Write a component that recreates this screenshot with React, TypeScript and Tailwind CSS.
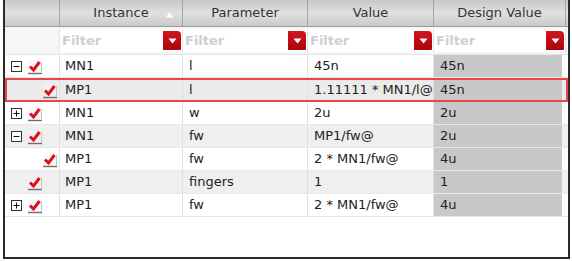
import React from "react";

type Row = {
  tree: "minus" | "plus" | null;
  level: 0 | 1;
  inst: string;
  param: string;
  value: string;
  design: string;
};

const rows: Row[] = [
  { tree: "minus", level: 0, inst: "MN1", param: "l", value: "45n", design: "45n" },
  { tree: null, level: 1, inst: "MP1", param: "l", value: "1.11111 * MN1/l@", design: "45n" },
  { tree: "plus", level: 0, inst: "MN1", param: "w", value: "2u", design: "2u" },
  { tree: "minus", level: 0, inst: "MN1", param: "fw", value: "MP1/fw@", design: "2u" },
  { tree: null, level: 1, inst: "MP1", param: "fw", value: "2 * MN1/fw@", design: "4u" },
  { tree: null, level: 0, inst: "MP1", param: "fingers", value: "1", design: "1" },
  { tree: "plus", level: 0, inst: "MP1", param: "fw", value: "2 * MN1/fw@", design: "4u" },
];

const SELECTED = 1;

function CheckBox() {
  return (
    <svg width="16" height="17" viewBox="0 0 16 17" className="shrink-0">
      <rect x="1" y="2" width="14" height="13" fill="#f4f4f4" opacity="0.5" />
      <line x1="1" y1="15.5" x2="15" y2="15.5" stroke="#6e6e6e" strokeWidth="1.4" />
      <line x1="14.5" y1="4" x2="14.5" y2="15" stroke="#c4c4c4" strokeWidth="1" />
      <path d="M3 8.5 L6.5 12 L12.5 4" fill="none" stroke="#e0101a" strokeWidth="3" strokeLinejoin="miter" strokeLinecap="butt" />
    </svg>
  );
}

function TreeBox({ kind }: { kind: "minus" | "plus" }) {
  return (
    <svg width="11" height="11" viewBox="0 0 11 11" className="shrink-0">
      <rect x="0.5" y="0.5" width="10" height="10" fill="white" stroke="#333" />
      <line x1="2.5" y1="5.5" x2="8.5" y2="5.5" stroke="#111" />
      {kind === "plus" && <line x1="5.5" y1="2.5" x2="5.5" y2="8.5" stroke="#111" />}
    </svg>
  );
}

function FilterButton() {
  return (
    <div className="flex h-[19px] w-[18px] shrink-0 items-center justify-center rounded-tr-[4px] rounded-br-[1px] bg-gradient-to-b from-[#d4141c] to-[#a8060c]">
      <svg width="9" height="6" viewBox="0 0 9 6">
        <path d="M0.5 0.5 L8.5 0.5 L4.5 5.5 Z" fill="white" />
      </svg>
    </div>
  );
}

function FilterCell({ w }: { w: string }) {
  return (
    <div className={`${w} flex items-center justify-between border-r border-[#e4e4e4] bg-white pl-[2px] pr-[1px]`}>
      <span className="font-bold text-[#cfcfcf]">Filter</span>
      <FilterButton />
    </div>
  );
}

function Header({ w, label, sort }: { w: string; label: string; sort?: boolean }) {
  return (
    <div className={`${w} relative flex items-center justify-center border-r border-[#a4a4a4] text-[#333]`}>
      <span>{label}</span>
      {sort && (
        <svg width="9" height="6" viewBox="0 0 9 6" className="absolute right-[8px] top-[12px]">
          <path d="M0.5 5.5 L8.5 5.5 L4.5 0.5 Z" fill="white" />
        </svg>
      )}
    </div>
  );
}

export default function App() {
  return (
    <div
      className="h-[261px] w-[572px] bg-white pb-[2px] pl-[3px] pr-[2px] text-[13px] text-[#222]"
      style={{ fontFamily: '"DejaVu Sans", sans-serif' }}
    >
      <div className="flex h-full flex-col border-b-2 border-l-2 border-r-2 border-[#2a2a2a] bg-white">
        {/* header */}
        <div className="flex h-[27px] border-b border-[#9c9c9c] bg-gradient-to-b from-[#c8c8c8] via-[#e0e0e0] to-[#cacaca]">
          <Header w="w-[55px]" label="" />
          <Header w="w-[123px]" label="Instance" sort />
          <Header w="w-[125px]" label="Parameter" />
          <Header w="w-[126px]" label="Value" />
          <Header w="w-[132px]" label="Design Value" />
        </div>
        {/* filter row */}
        <div className="flex h-[28px] items-center border-b border-[#e4e4e4] bg-[#f6f6f6] py-[2px]">
          <div className="h-full w-[55px] border-r border-[#e4e4e4]" />
          <FilterCell w="h-full w-[123px]" />
          <FilterCell w="h-full w-[125px]" />
          <FilterCell w="h-full w-[126px]" />
          <FilterCell w="h-full w-[132px]" />
        </div>
        {/* data rows */}
        {rows.map((r, i) => {
          const sel = i === SELECTED;
          const bg = sel ? "bg-[#ebebeb]" : i % 2 === 1 ? "bg-[#efefef]" : "bg-white";
          return (
            <div
              key={i}
              className={`flex ${sel ? "h-[24px] border-2 border-[#e8474a]" : "h-[23px] border-b border-[#e8e8e8]"} ${bg}`}
            >
              <div className={`flex ${sel ? "w-[53px]" : "w-[55px]"} items-center border-r border-[#e0e0e0]`}>
                <div className={`${sel ? "w-[0px]" : "w-[2px]"}`} />
                <div className="flex w-[18px] justify-center">{r.tree && <TreeBox kind={r.tree} />}</div>
                <div className={r.level === 1 ? "w-[17px]" : "w-[2px]"} />
                <CheckBox />
              </div>
              <div className="flex w-[123px] items-center border-r border-[#e0e0e0] pl-[5px]">{r.inst}</div>
              <div className="flex w-[125px] items-center border-r border-[#e0e0e0] pl-[6px]">{r.param}</div>
              <div className="flex w-[126px] items-center border-r border-[#e0e0e0] pl-[6px]">{r.value}</div>
              <div className="flex w-[128px] items-center bg-[#c8c8c8] pl-[6px]">{r.design}</div>
            </div>
          );
        })}
      </div>
    </div>
  );
}
